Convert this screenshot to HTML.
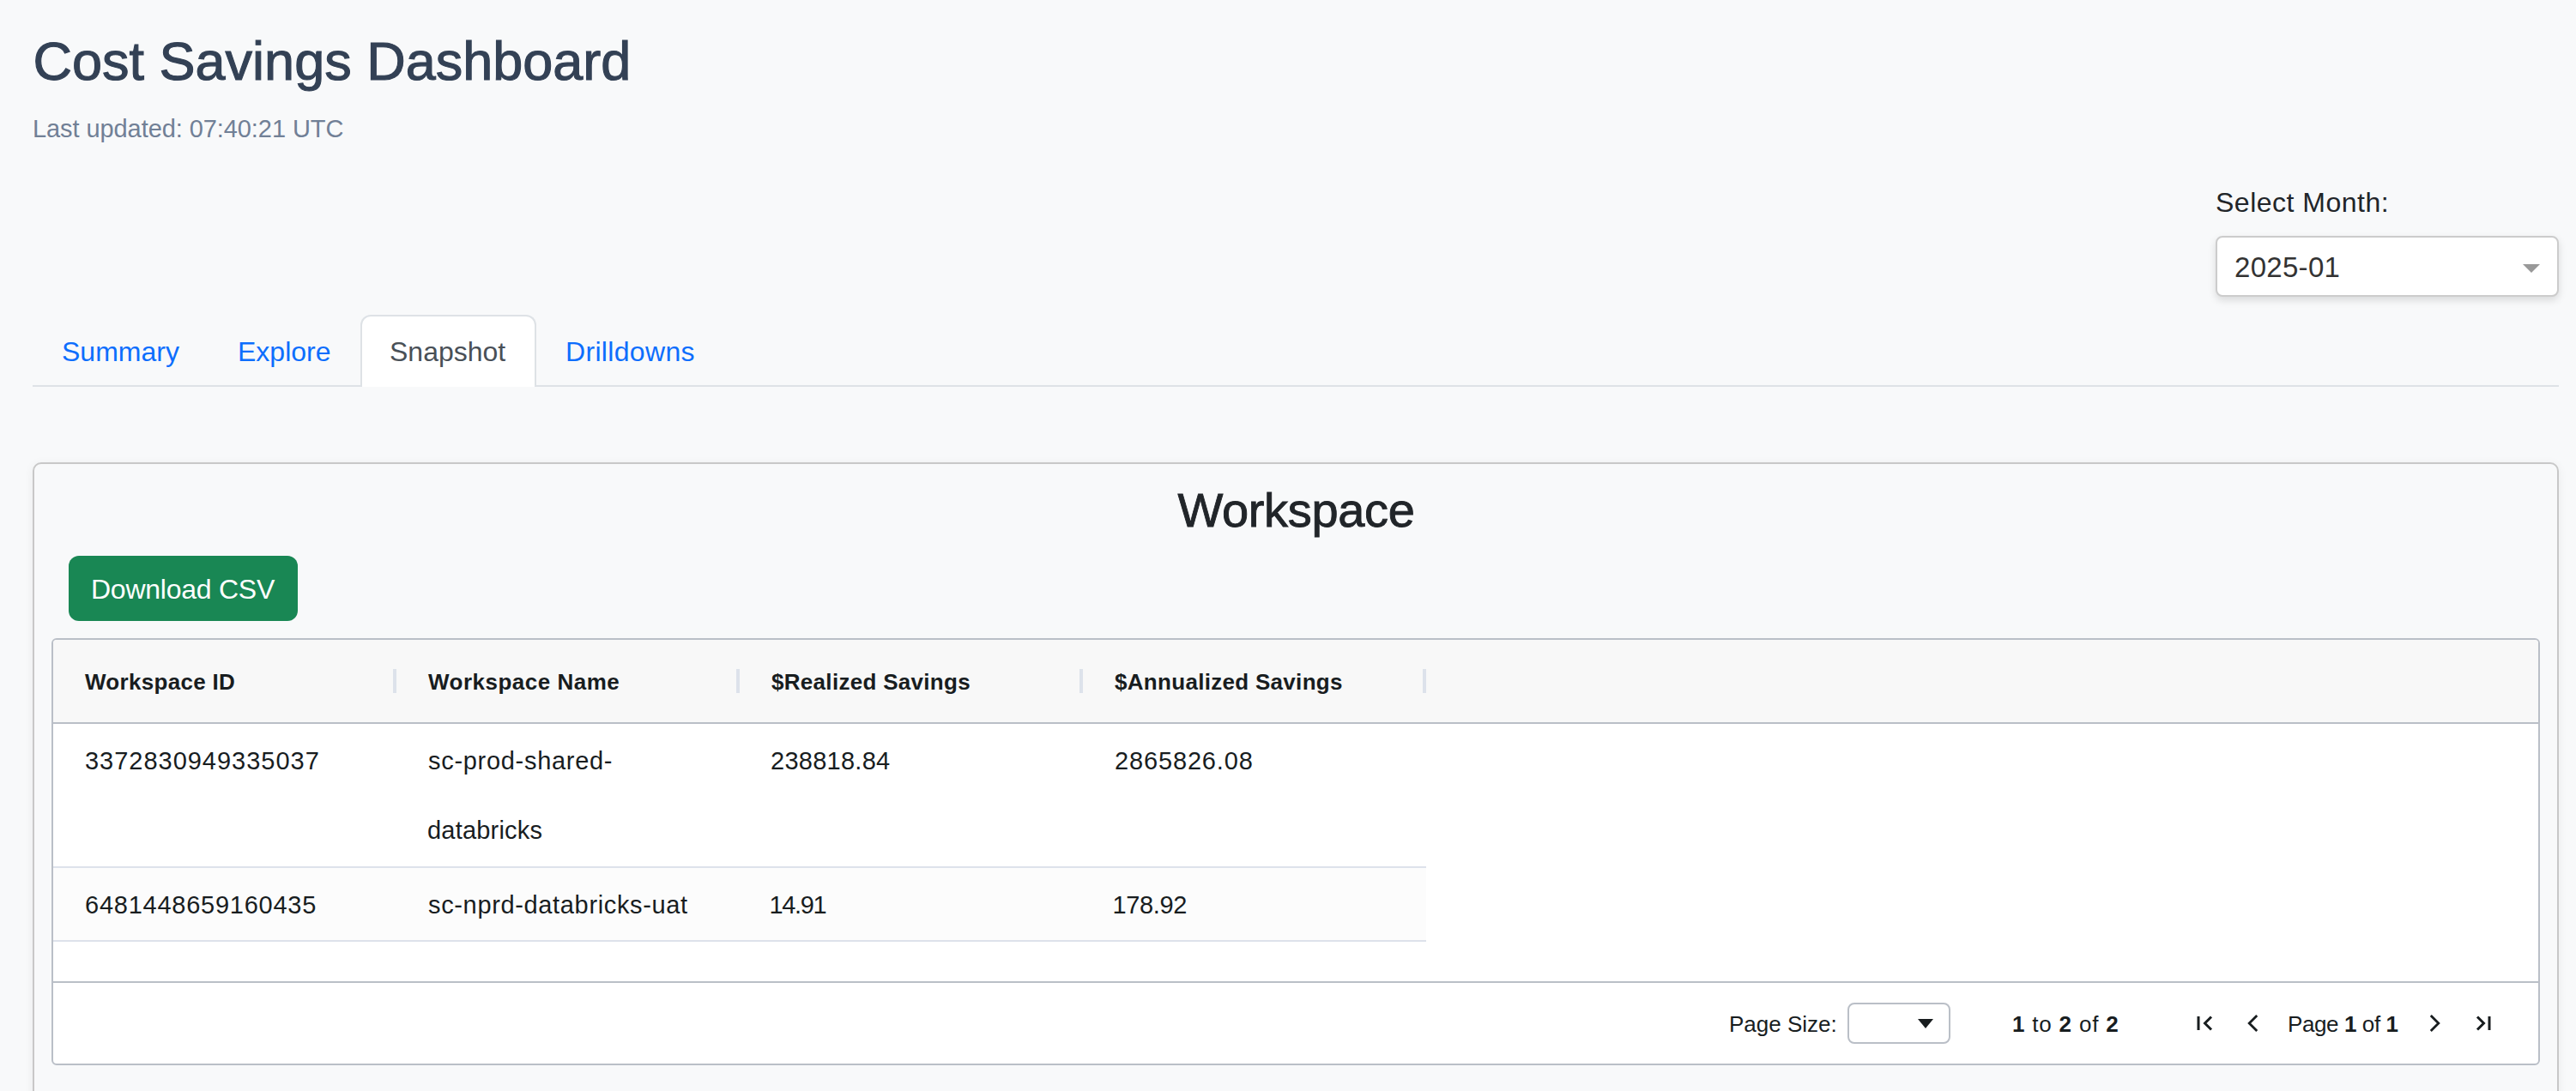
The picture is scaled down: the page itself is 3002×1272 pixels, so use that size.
<!DOCTYPE html>
<html>
<head>
<meta charset="utf-8">
<style>
html,body{margin:0;padding:0;}
body{width:3002px;height:1272px;overflow:hidden;background:#f8f9fa;font-family:"Liberation Sans",sans-serif;color:#212529;position:relative;}
.abs{position:absolute;white-space:nowrap;line-height:1;}
#title{left:38.5px;top:39.9px;font-size:63px;color:#334155;letter-spacing:0px;-webkit-text-stroke:1.1px #334155;}
#updated{left:38px;top:135.5px;font-size:29px;color:#718096;letter-spacing:-0.08px;}
#selLabel{left:2582px;top:220px;font-size:32px;color:#212529;letter-spacing:0.5px;}
#dd{left:2582px;top:275px;width:400px;height:71px;box-sizing:border-box;border:2px solid #ccc;border-radius:8px;background:#fff;box-shadow:0 4px 10px rgba(0,0,0,.13);}
#ddText{left:2604px;top:295px;font-size:33px;color:#333;letter-spacing:0.3px;}
#ddArrow{left:2940px;top:308px;width:0;height:0;border-style:solid;border-width:10px 10px 0 10px;border-color:#999 transparent transparent transparent;}
#tabline{left:38px;top:449px;width:2944px;height:2px;background:#dee2e6;}
.tab{font-size:32px;color:#0d6efd;top:394px;}
#tabActive{left:420px;top:367px;width:205px;height:84px;box-sizing:border-box;border:2px solid #dee2e6;border-bottom:none;border-radius:12px 12px 0 0;background:#fff;}
#card{left:38px;top:539px;width:2944px;height:900px;box-sizing:border-box;border:2px solid #c8c8c8;border-radius:10px;background:#f8f9fa;box-shadow:0 2px 12px rgba(0,0,0,.06);}
#h3{left:1372.5px;top:567.4px;font-size:56px;color:#212529;letter-spacing:-0.35px;-webkit-text-stroke:0.9px #212529;}
#btn{left:80px;top:648px;width:267px;height:76px;background:#198754;border-radius:12px;}
#btnText{left:106px;top:671px;font-size:32px;color:#fff;letter-spacing:-0.25px;}
#grid{left:60px;top:744px;width:2900px;height:498px;box-sizing:border-box;border:2px solid #babfc7;border-radius:6px;background:#fff;overflow:hidden;}
#ghead{left:0;top:0;width:100%;height:98px;background:#f8f8f8;border-bottom:2px solid #babfc7;box-sizing:border-box;}
.hc{font-size:26px;font-weight:bold;color:#181d1f;top:782px;letter-spacing:0.3px;}
.sep{top:780px;width:4px;height:28px;background:#dde2eb;}
.cell{font-size:29px;color:#181d1f;letter-spacing:0.5px;}
.num{letter-spacing:0.85px;}
#row2bg{left:62px;top:1012px;width:1600px;height:84px;background:#fcfcfc;}
.rowline{left:62px;width:1600px;height:2px;background:#dde2eb;}
#footline{left:62px;top:1144px;width:2896px;height:2px;background:#babfc7;}
.pg{font-size:26px;color:#181d1f;top:1181px;}
#psel{left:2153px;top:1169px;width:120px;height:48px;box-sizing:border-box;border:2px solid #babfc7;border-radius:8px;background:#fff;}
#pselArrow{left:2235px;top:1187.5px;width:0;height:0;border-style:solid;border-width:11px 9px 0 9px;border-color:#181d1f transparent transparent transparent;}
</style>
</head>
<body>
<div class="abs" id="title">Cost Savings Dashboard</div>
<div class="abs" id="updated">Last updated: 07:40:21 UTC</div>

<div class="abs" id="selLabel">Select Month:</div>
<div class="abs" id="dd"></div>
<div class="abs" id="ddText">2025-01</div>
<div class="abs" id="ddArrow"></div>

<div class="abs" id="tabline"></div>
<div class="abs" id="tabActive"></div>
<div class="abs tab" style="left:72px;">Summary</div>
<div class="abs tab" style="left:277px;">Explore</div>
<div class="abs tab" style="left:454px;color:#495057;">Snapshot</div>
<div class="abs tab" style="left:659px;letter-spacing:0.33px;">Drilldowns</div>

<div class="abs" id="card"></div>
<div class="abs" id="h3">Workspace</div>
<div class="abs" id="btn"></div>
<div class="abs" id="btnText">Download CSV</div>

<div class="abs" id="grid"><div class="abs" id="ghead"></div></div>
<div class="abs hc" style="left:99px;">Workspace ID</div>
<div class="abs hc" style="left:499px;letter-spacing:0.5px;">Workspace Name</div>
<div class="abs hc" style="left:899px;">$Realized Savings</div>
<div class="abs hc" style="left:1299px;">$Annualized Savings</div>
<div class="abs sep" style="left:458px;"></div>
<div class="abs sep" style="left:858px;"></div>
<div class="abs sep" style="left:1258px;"></div>
<div class="abs sep" style="left:1658px;"></div>

<div class="abs" id="row2bg"></div>
<div class="abs rowline" style="top:1010px;"></div>
<div class="abs rowline" style="top:1096px;"></div>

<div class="abs cell" style="left:99px;top:873px;letter-spacing:0.98px;">3372830949335037</div>
<div class="abs cell" style="left:499px;top:873px;letter-spacing:0.7px;">sc-prod-shared-</div>
<div class="abs cell" style="left:498px;top:954px;letter-spacing:0.2px;">databricks</div>
<div class="abs cell" style="left:898px;top:873px;letter-spacing:0.26px;">238818.84</div>
<div class="abs cell num" style="left:1299px;top:873px;">2865826.08</div>

<div class="abs cell" style="left:99px;top:1041px;letter-spacing:0.75px;">6481448659160435</div>
<div class="abs cell" style="left:499px;top:1041px;letter-spacing:0.65px;">sc-nprd-databricks-uat</div>
<div class="abs cell" style="left:896.5px;top:1041px;letter-spacing:-1.35px;">14.91</div>
<div class="abs cell" style="left:1296.5px;top:1041px;letter-spacing:-0.35px;">178.92</div>

<div class="abs" id="footline"></div>
<div class="abs pg" style="left:2015px;">Page Size:</div>
<div class="abs" id="psel"></div>
<div class="abs" id="pselArrow"></div>
<div class="abs pg" style="left:2345px;letter-spacing:0.8px;"><b>1</b> to <b>2</b> of <b>2</b></div>
<div class="abs pg" style="left:2666px;letter-spacing:-0.4px;">Page <b>1</b> of <b>1</b></div>

<svg class="abs" style="left:2555px;top:1180px;" width="28" height="28" viewBox="0 0 28 28">
  <path d="M7 5 V21" stroke="#181d1f" stroke-width="3" fill="none"/>
  <path d="M22 5.5 L14.5 13 L22 20.5" stroke="#181d1f" stroke-width="3" fill="none"/>
</svg>
<svg class="abs" style="left:2612px;top:1179px;" width="28" height="28" viewBox="0 0 28 28">
  <path d="M18.2 5 L9.2 14 L18.2 23" stroke="#181d1f" stroke-width="2.8" fill="none"/>
</svg>
<svg class="abs" style="left:2823px;top:1179px;" width="28" height="28" viewBox="0 0 28 28">
  <path d="M9.8 5 L18.8 14 L9.8 23" stroke="#181d1f" stroke-width="2.8" fill="none"/>
</svg>
<svg class="abs" style="left:2881px;top:1180px;" width="28" height="28" viewBox="0 0 28 28">
  <path d="M6 5.5 L13.5 13 L6 20.5" stroke="#181d1f" stroke-width="3" fill="none"/>
  <path d="M20 5 V21" stroke="#181d1f" stroke-width="3" fill="none"/>
</svg>
</body>
</html>
